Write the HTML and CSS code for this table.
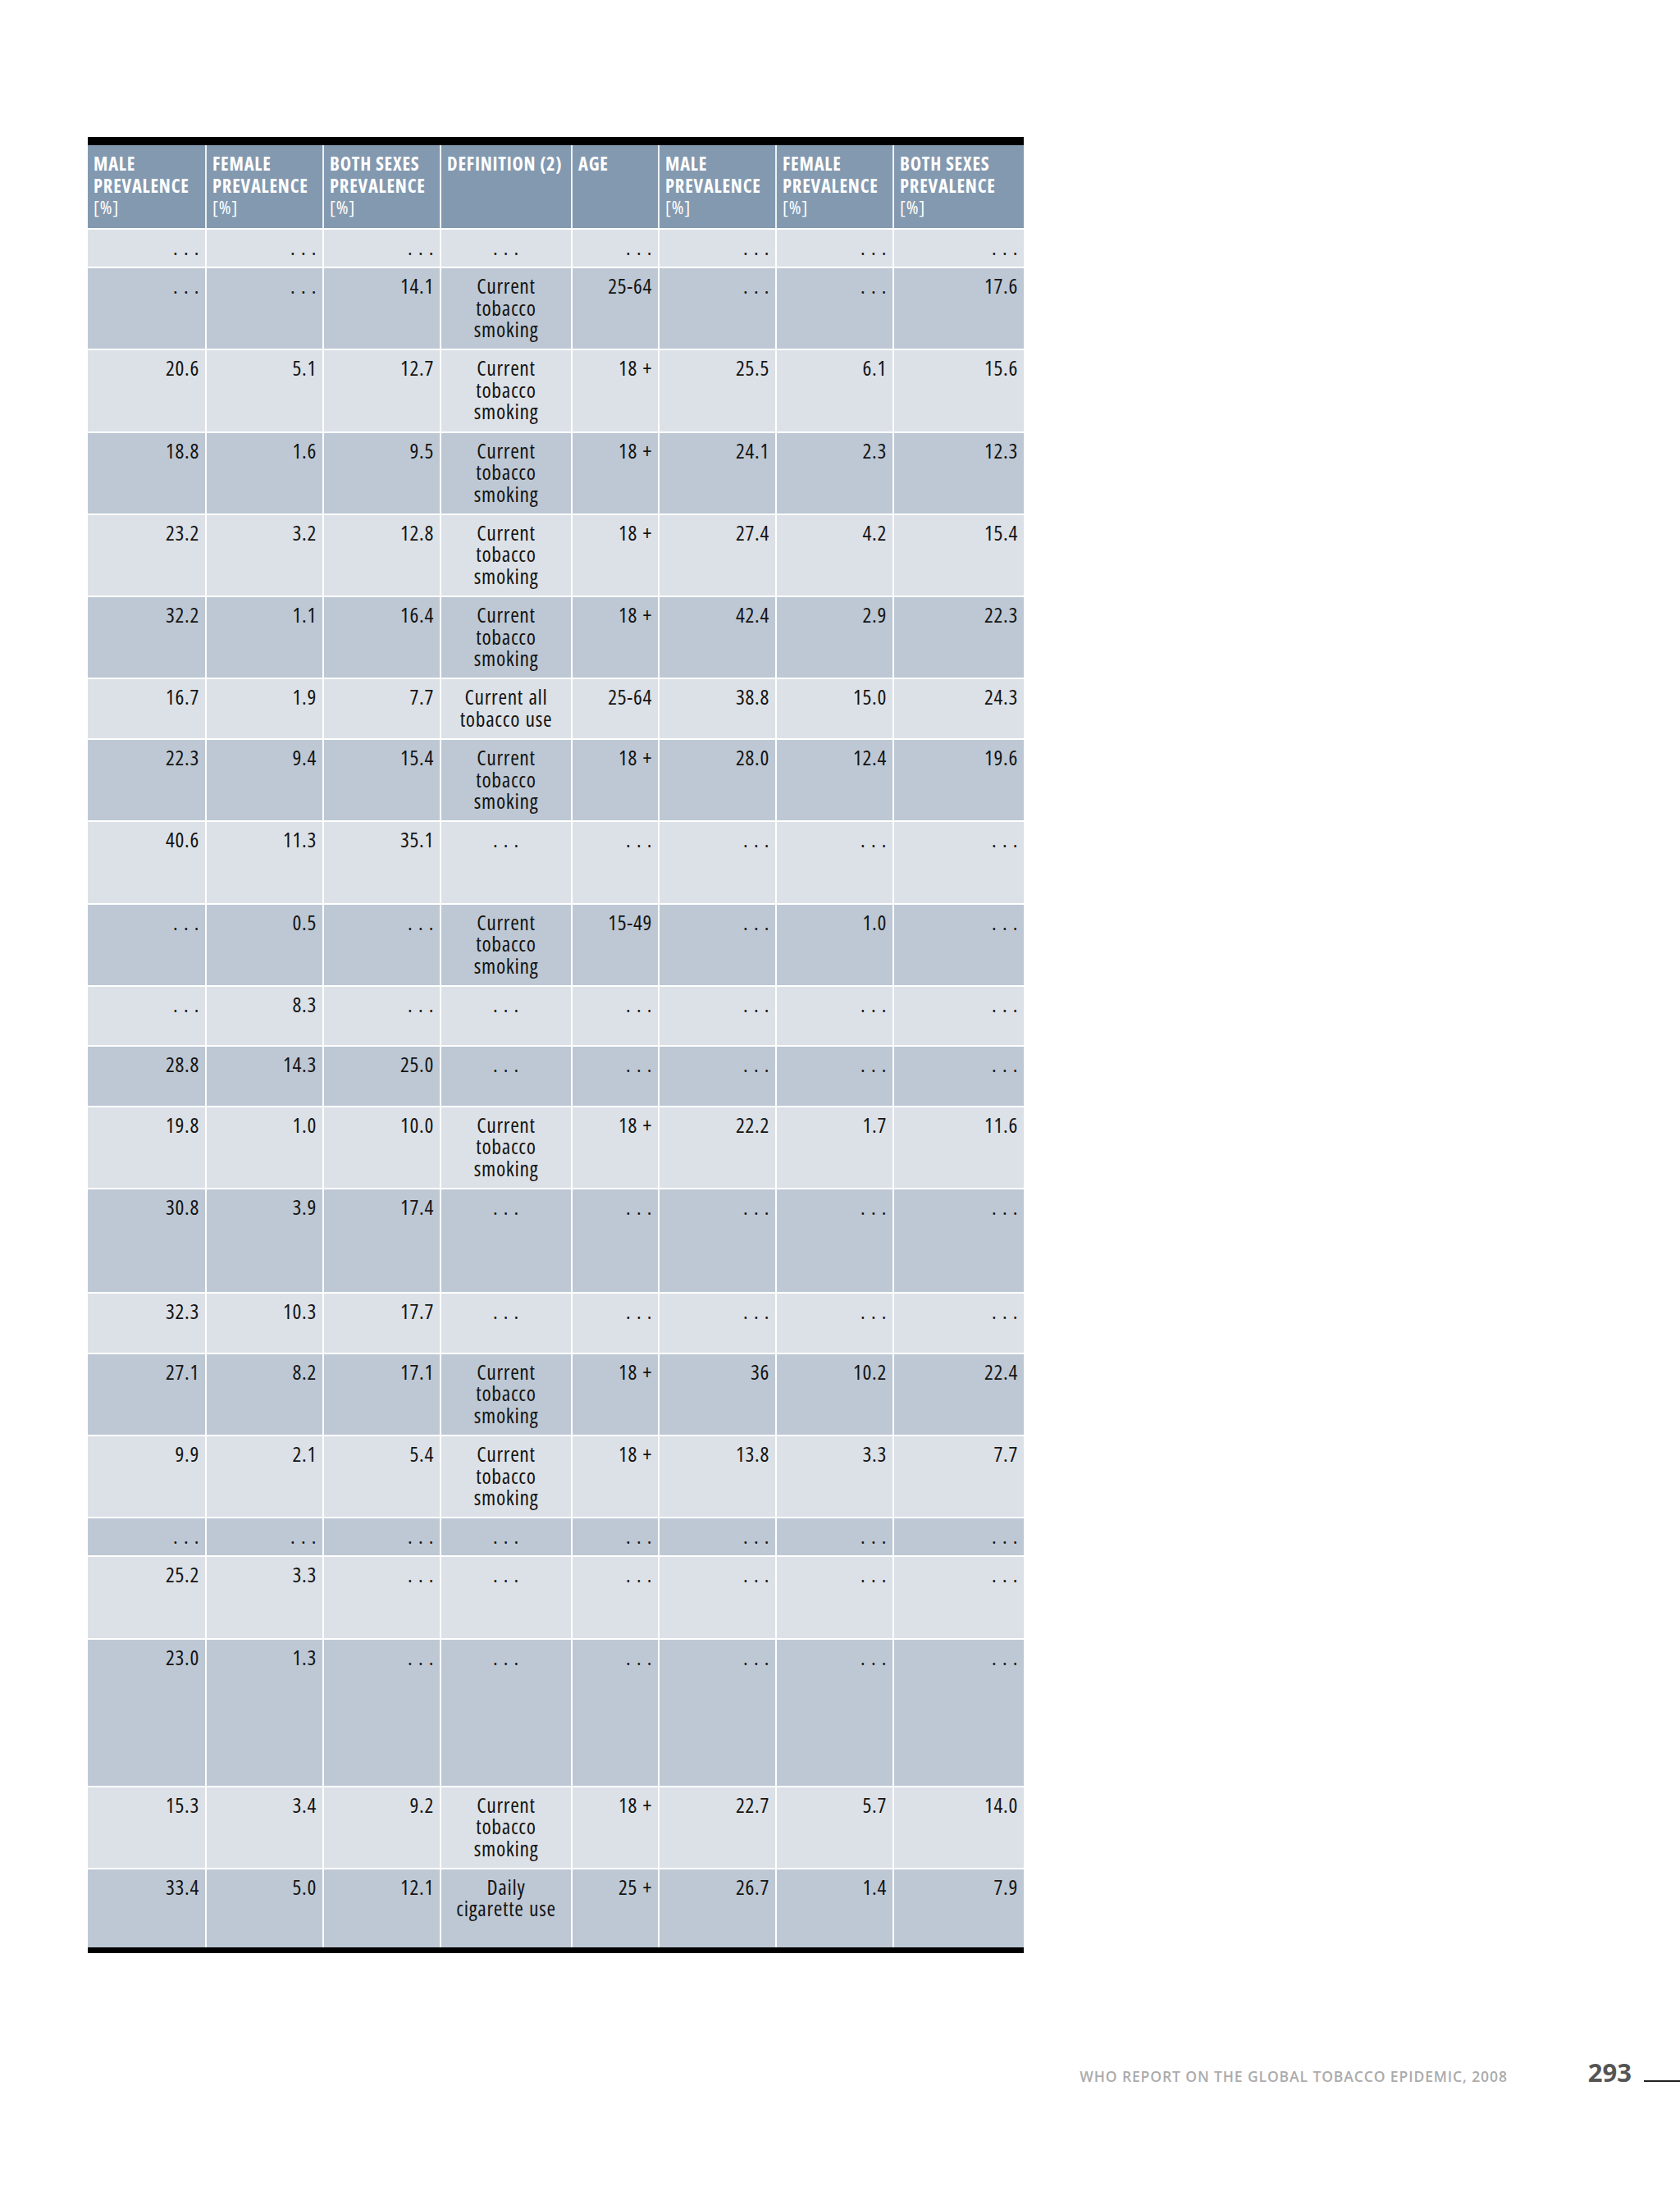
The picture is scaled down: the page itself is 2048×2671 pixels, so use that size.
FILE: index.html
```html
<!DOCTYPE html>
<html lang="en">
<head>
<meta charset="utf-8">
<title>WHO Report on the Global Tobacco Epidemic, 2008 — page 293</title>
<link rel="stylesheet" href="styles.css">
</head>
<body>
<div class="page">
  <table class="data">
    <colgroup>
      <col class="c-num"><col class="c-num"><col class="c-num"><col class="c-def"><col class="c-age"><col class="c-num"><col class="c-num"><col class="c-def">
    </colgroup>
    <thead>
      <tr>
        <th>MALE<br>PREVALENCE<br><span class="unit">[%]</span></th>
        <th>FEMALE<br>PREVALENCE<br><span class="unit">[%]</span></th>
        <th>BOTH SEXES<br>PREVALENCE<br><span class="unit">[%]</span></th>
        <th>DEFINITION (2)</th>
        <th>AGE</th>
        <th>MALE<br>PREVALENCE<br><span class="unit">[%]</span></th>
        <th>FEMALE<br>PREVALENCE<br><span class="unit">[%]</span></th>
        <th>BOTH SEXES<br>PREVALENCE<br><span class="unit">[%]</span></th>
      </tr>
    </thead>
    <tbody>
      <tr class="l1"><td>. . .</td><td>. . .</td><td>. . .</td><td class="def">. . .</td><td>. . .</td><td>. . .</td><td>. . .</td><td>. . .</td></tr>
      <tr class="l3"><td>. . .</td><td>. . .</td><td>14.1</td><td class="def">Current<br>tobacco<br>smoking</td><td>25-64</td><td>. . .</td><td>. . .</td><td>17.6</td></tr>
      <tr class="l3"><td>20.6</td><td>5.1</td><td>12.7</td><td class="def">Current<br>tobacco<br>smoking</td><td>18 +</td><td>25.5</td><td>6.1</td><td>15.6</td></tr>
      <tr class="l3"><td>18.8</td><td>1.6</td><td>9.5</td><td class="def">Current<br>tobacco<br>smoking</td><td>18 +</td><td>24.1</td><td>2.3</td><td>12.3</td></tr>
      <tr class="l3"><td>23.2</td><td>3.2</td><td>12.8</td><td class="def">Current<br>tobacco<br>smoking</td><td>18 +</td><td>27.4</td><td>4.2</td><td>15.4</td></tr>
      <tr class="l3"><td>32.2</td><td>1.1</td><td>16.4</td><td class="def">Current<br>tobacco<br>smoking</td><td>18 +</td><td>42.4</td><td>2.9</td><td>22.3</td></tr>
      <tr class="l2"><td>16.7</td><td>1.9</td><td>7.7</td><td class="def">Current all<br>tobacco use</td><td>25-64</td><td>38.8</td><td>15.0</td><td>24.3</td></tr>
      <tr class="l3"><td>22.3</td><td>9.4</td><td>15.4</td><td class="def">Current<br>tobacco<br>smoking</td><td>18 +</td><td>28.0</td><td>12.4</td><td>19.6</td></tr>
      <tr class="l3"><td>40.6</td><td>11.3</td><td>35.1</td><td class="def">. . .</td><td>. . .</td><td>. . .</td><td>. . .</td><td>. . .</td></tr>
      <tr class="l3"><td>. . .</td><td>0.5</td><td>. . .</td><td class="def">Current<br>tobacco<br>smoking</td><td>15-49</td><td>. . .</td><td>1.0</td><td>. . .</td></tr>
      <tr class="l2"><td>. . .</td><td>8.3</td><td>. . .</td><td class="def">. . .</td><td>. . .</td><td>. . .</td><td>. . .</td><td>. . .</td></tr>
      <tr class="l2"><td>28.8</td><td>14.3</td><td>25.0</td><td class="def">. . .</td><td>. . .</td><td>. . .</td><td>. . .</td><td>. . .</td></tr>
      <tr class="l3"><td>19.8</td><td>1.0</td><td>10.0</td><td class="def">Current<br>tobacco<br>smoking</td><td>18 +</td><td>22.2</td><td>1.7</td><td>11.6</td></tr>
      <tr class="l4"><td>30.8</td><td>3.9</td><td>17.4</td><td class="def">. . .</td><td>. . .</td><td>. . .</td><td>. . .</td><td>. . .</td></tr>
      <tr class="l2"><td>32.3</td><td>10.3</td><td>17.7</td><td class="def">. . .</td><td>. . .</td><td>. . .</td><td>. . .</td><td>. . .</td></tr>
      <tr class="l3"><td>27.1</td><td>8.2</td><td>17.1</td><td class="def">Current<br>tobacco<br>smoking</td><td>18 +</td><td>36</td><td>10.2</td><td>22.4</td></tr>
      <tr class="l3"><td>9.9</td><td>2.1</td><td>5.4</td><td class="def">Current<br>tobacco<br>smoking</td><td>18 +</td><td>13.8</td><td>3.3</td><td>7.7</td></tr>
      <tr class="l1"><td>. . .</td><td>. . .</td><td>. . .</td><td class="def">. . .</td><td>. . .</td><td>. . .</td><td>. . .</td><td>. . .</td></tr>
      <tr class="l3"><td>25.2</td><td>3.3</td><td>. . .</td><td class="def">. . .</td><td>. . .</td><td>. . .</td><td>. . .</td><td>. . .</td></tr>
      <tr class="l6"><td>23.0</td><td>1.3</td><td>. . .</td><td class="def">. . .</td><td>. . .</td><td>. . .</td><td>. . .</td><td>. . .</td></tr>
      <tr class="l3"><td>15.3</td><td>3.4</td><td>9.2</td><td class="def">Current<br>tobacco<br>smoking</td><td>18 +</td><td>22.7</td><td>5.7</td><td>14.0</td></tr>
      <tr class="last"><td>33.4</td><td>5.0</td><td>12.1</td><td class="def">Daily<br>cigarette use</td><td>25 +</td><td>26.7</td><td>1.4</td><td>7.9</td></tr>
    </tbody>
  </table>

  <footer class="footer">
    <span class="report">WHO REPORT ON THE GLOBAL TOBACCO EPIDEMIC, 2008</span>
    <span class="pageno">293</span>
    <span class="rule"></span>
  </footer>
</div>
</body>
</html>
```

FILE: styles.css
```css
html, body {
  margin: 0;
  padding: 0;
  background: #ffffff;
}

.page {
  width: 2048px;
  min-height: 2671px;
  box-sizing: border-box;
  padding: 167px 0 0 107px;
  font-family: "Open Sans", "Noto Sans", "Liberation Sans", sans-serif;
}

.data {
  width: 1140px;
  table-layout: fixed;
  border-collapse: separate;
  border-spacing: 0;
  border-top: 10px solid #000000;
  border-bottom: 7px solid #000000;
  font-stretch: 75%;
}

.c-num { width: 143px; }
.c-def { width: 160px; }
.c-age { width: 106px; }

.data th {
  background: #8399b0;
  color: #ffffff;
  font-weight: 700;
  font-size: 22.5px;
  letter-spacing: 0.8px;
  line-height: 26.7px;
  text-align: left;
  vertical-align: top;
  padding: 10px 4px 0 7px;
  height: 101px;
  box-sizing: border-box;
  border-left: 2px solid #eef1f4;
}

.data th:first-child { border-left: 0; }

.data th .unit { font-weight: 400; }

.data td {
  font-size: 25.5px;
  letter-spacing: 0.7px;
  word-spacing: 1px;
  line-height: 26.6px;
  color: #141414;
  text-align: right;
  vertical-align: top;
  padding: 8px 7px 0 4px;
  border-left: 2px solid #ffffff;
  border-top: 2px solid #ffffff;
  box-sizing: border-box;
}

.data td:first-child { border-left: 0; }

.data td.def {
  text-align: center;
  padding-left: 2px;
  padding-right: 2px;
}

.data tbody tr:nth-child(odd) { background: #dce1e7; }
.data tbody tr:nth-child(even) { background: #bdc8d4; }

.l1 td { height: 47px; }
.l2 td { height: 73.5px; }
.l3 td { height: 100.3px; }
.l4 td { height: 127px; }
.l6 td { height: 180px; }
.last td { height: 97px; }

.footer {
  display: flex;
  justify-content: flex-end;
  align-items: baseline;
  margin-top: 124px;
}

.report {
  font-size: 17.5px;
  font-weight: 600;
  color: #ababab;
  letter-spacing: 0.9px;
}

.pageno {
  margin-left: 98px;
  font-size: 31px;
  font-weight: 700;
  color: #555555;
}

.rule {
  display: inline-block;
  width: 44px;
  height: 2px;
  margin-left: 15px;
  background: #222222;
}
```
